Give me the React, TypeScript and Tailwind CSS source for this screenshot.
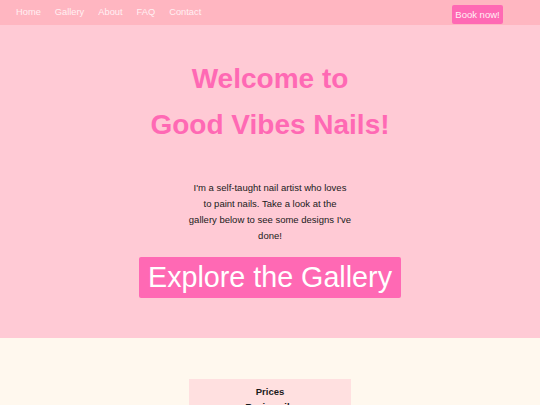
import React from 'react';

const links = ['Home', 'Gallery', 'About', 'FAQ', 'Contact'];

export default function App() {
  return (
    <div className="min-h-screen font-['Liberation_Sans',Arial,sans-serif]">
      {/* Nav */}
      <nav className="h-[25px] bg-[#ffb6c1] flex items-center justify-between pl-[16px] pr-[37px]">
        <ul className="flex gap-[14px] text-[9.3px] text-[#fff0f3]">
          {links.map((l) => (
            <li key={l}>{l}</li>
          ))}
        </ul>
        <button className="h-[19px] mt-[4px] w-[51px] rounded-[2px] bg-[#ff69b4] text-[9.5px] text-[#fff0f5] leading-none">
          Book now!
        </button>
      </nav>

      {/* Hero */}
      <section className="bg-[#ffcad5] h-[313px] flex flex-col items-center pt-[31px]">
        <h1 className="text-[28px] font-bold leading-[46px] text-[#ff69b4] text-center">
          Welcome to
          <br />
          Good Vibes Nails!
        </h1>
        <p className="mt-[32px] w-[180px] text-center text-[9.5px] leading-[16px] text-[#1a1a1a]">
          I'm a self-taught nail artist who loves
          <br />
          to paint nails. Take a look at the
          <br />
          gallery below to see some designs I've
          <br />
          done!
        </p>
        <button className="mt-[13px] h-[41px] w-[262px] rounded-[2px] bg-[#ff69b4] text-white text-[28.7px] leading-none">
          Explore the Gallery
        </button>
      </section>

      {/* Prices */}
      <section className="bg-[#fff8ee] pt-[41px] flex justify-center">
        <div className="w-[162px] bg-[#ffe0e0] pt-[5px] pb-[10px] text-center text-[9.5px] font-bold text-[#1a1a1a] leading-[15px]">
          <div>Prices</div>
          <div>Basic nails</div>
        </div>
      </section>
    </div>
  );
}
